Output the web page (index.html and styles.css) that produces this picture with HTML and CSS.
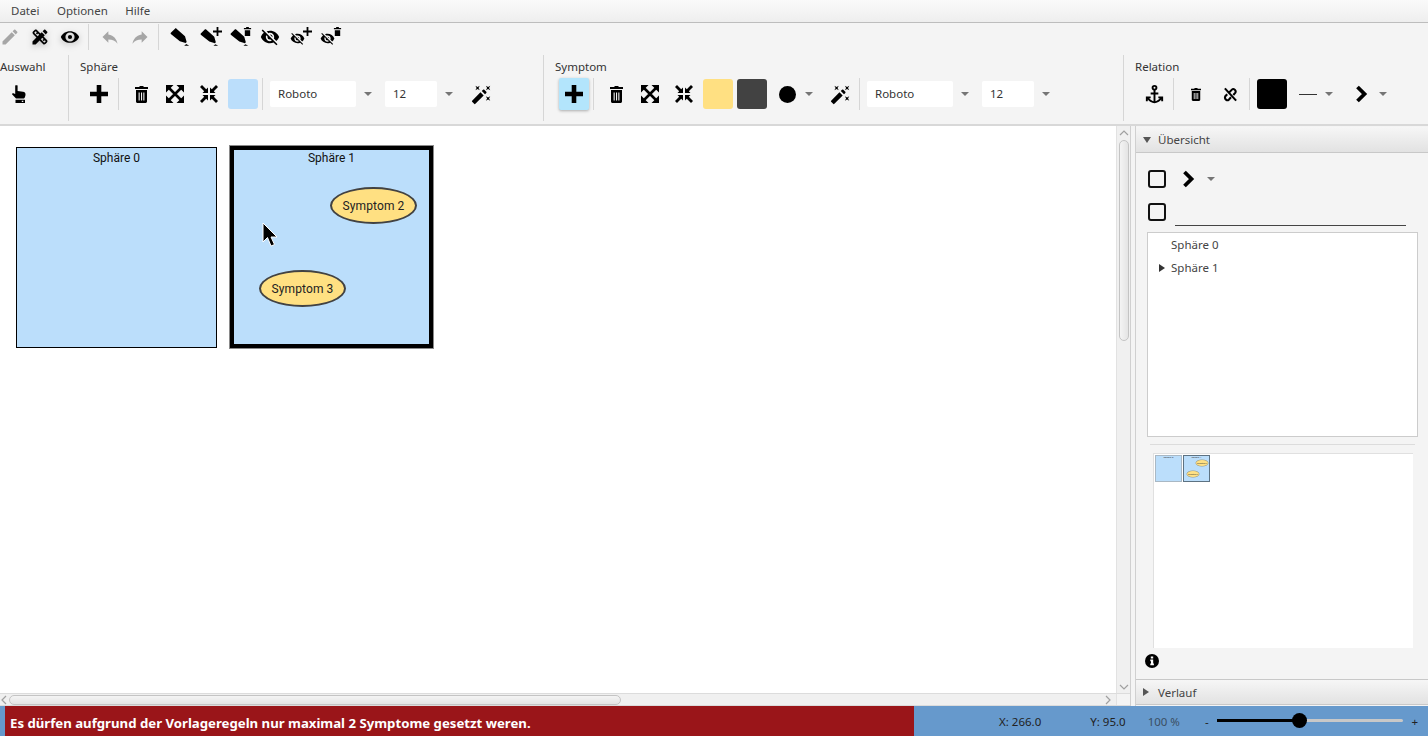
FILE: index.html
```html
<!DOCTYPE html>
<html lang="de">
<head>
  <meta charset="UTF-8" />
  <title>Symptom Editor</title>
  <link rel="stylesheet" href="styles.css">
</head>
<body>
  <svg class="defs" width="0" height="0">
    <symbol id="i-pencil" viewBox="0 0 24 24"><path d="M20.71,7.04C21.1,6.65 21.1,6 20.71,5.63L18.37,3.29C18,2.9 17.35,2.9 16.96,3.29L15.12,5.12L18.87,8.87M3,17.25V21H6.75L17.81,9.93L14.06,6.18L3,17.25Z"/></symbol>
    <symbol id="i-tools" viewBox="0 0 24 24"><path d="M16.24 11.51l1.57-1.57-3.75-3.75-1.57 1.57-4.14-4.13c-.78-.78-2.05-.78-2.83 0l-1.9 1.9c-.78.78-.78 2.05 0 2.83l4.13 4.13L3 17.25V21h3.75l4.76-4.76 4.13 4.13c.95.95 2.23.6 2.83 0l1.9-1.9c.78-.78.78-2.05 0-2.83l-4.13-4.13zm-7.06-.44L5.04 6.94l1.89-1.9L8.2 6.31 7.02 7.5l1.41 1.41 1.19-1.19 1.45 1.45-1.89 1.9zm7.88 7.89l-4.13-4.14 1.9-1.9 1.45 1.45-1.19 1.19 1.41 1.41 1.19-1.19 1.27 1.27-1.9 1.91zM20.71 7.04c.39-.39.39-1.02 0-1.41l-2.34-2.34c-.47-.47-1.12-.29-1.41 0l-1.83 1.83 3.75 3.75 1.83-1.83z"/></symbol>
    <symbol id="i-eye" viewBox="0 0 24 24"><path d="M12,9.500A2.500,2.500 0 0,0 9.500,12A2.500,2.500 0 0,0 12,14.500A2.500,2.500 0 0,0 14.500,12A2.500,2.500 0 0,0 12,9.500M12,17.500A5.500,5.500 0 0,1 6.500,12A5.500,5.500 0 0,1 12,6.500A5.500,5.500 0 0,1 17.500,12A5.500,5.500 0 0,1 12,17.500M12,5C7,5 2.730,7.800 1,12C2.730,16.200 7,19 12,19C17,19 21.270,16.200 23,12C21.270,7.800 17,5 12,5Z"/></symbol>
    <symbol id="i-eyeoff" viewBox="0 0 24 24"><path d="M11.83,9L15,12.16C15,12.11 15,12.05 15,12A3,3 0 0,0 12,9C11.94,9 11.89,9 11.83,9M7.53,9.8L9.08,11.35C9.03,11.56 9,11.77 9,12A3,3 0 0,0 12,15C12.22,15 12.44,14.97 12.65,14.92L14.2,16.47C13.53,16.8 12.79,17 12,17A5,5 0 0,1 7,12C7,11.21 7.2,10.47 7.53,9.8M2,4.27L4.28,6.55L4.73,7C3.08,8.3 1.78,10 1,12C2.73,16.39 7,19.5 12,19.5C13.55,19.5 15.03,19.2 16.38,18.66L16.81,19.08L19.73,22L21,20.73L3.27,3M12,7A5,5 0 0,1 17,12C17,12.64 16.87,13.26 16.64,13.82L19.57,16.75C21.07,15.5 22.27,13.86 23,12C21.27,7.61 17,4.5 12,4.5C10.6,4.5 9.26,4.75 8,5.2L10.17,7.35C10.74,7.13 11.35,7 12,7Z"/></symbol>
    <symbol id="i-undo" viewBox="0 0 24 24"><path d="M10 9V5l-7 7 7 7v-4.1c5 0 8.5 1.6 11 5.1-1-5-4-10-11-11z"/></symbol>
    <symbol id="i-redo" viewBox="0 0 24 24"><path d="M14 9V5l7 7-7 7v-4.1c-5 0-8.500 1.600-11 5.100 1-5 4-10 11-11z"/></symbol>
    <symbol id="i-marker" viewBox="0 0 24 24"><path d="M1 7 6 2c.5-.5 1.200-.5 1.800 0L18 11l2 7-1.200 1.200-7-2L1 8.500C.6 8 .6 7.500 1 7zM19.500 20.500 23 22.500h-6z"/></symbol>
    <symbol id="i-plusbadge" viewBox="0 0 10 10"><path d="M4 0h2v4h4v2H6v4H4V6H0V4h4z"/></symbol>
    <symbol id="i-binbadge" viewBox="0 0 10 10"><path d="M3.500 0h3v1H9v1.500H1V1h2.500zM2 3.500h6V10H2z"/></symbol>
    <symbol id="i-hand" viewBox="0 0 14 18"><path d="M3.200.6C3.800 0 5 0 5.600.6V6l5.400.7c1.500.2 2.500 1 2.500 2.500 0 1.500-.5 3.200-1.500 4.300H4L0 9.200l.8-1.200 2.400 1z"/><path fill-rule="evenodd" d="M3.500 14.800h9.500V18H3.500zM9.800 15.800h1.500v1.200H9.800z"/></symbol>
    <symbol id="i-plus" viewBox="0 0 18 18"><path d="M6.700 0h4.600v6.700H18v4.600h-6.700V18H6.700v-6.700H0V6.700h6.700z"/></symbol>
    <symbol id="i-trash" viewBox="0 0 13 17" preserveAspectRatio="none"><path fill-rule="evenodd" d="M4.500 0h4v1H13v2H0V1h4.500zM1 4h11v11.500c0 .8-.7 1.500-1.500 1.500h-8C1.700 17 1 16.300 1 15.500zM3.600 6.500v8h1.100v-8zM6 6.500v8h1.100v-8zM8.300 6.500v8h1.100v-8z"/></symbol>
    <symbol id="i-expand" viewBox="0 0 18 18"><path d="M0 0h7.500L0 7.500zM18 0v7.500L10.500 0zM0 18v-7.500L7.500 18zM18 18h-7.500l7.500-7.500z"/><path d="M3 3l12 12M15 3L3 15" fill="none" stroke="currentColor" stroke-width="2.600"/></symbol>
    <symbol id="i-compress" viewBox="0 0 18 18"><path d="M0 2 2 0l4.200 4.200L8 2.500V8H2.500l1.700-1.800zM18 2 16 0l-4.200 4.200L10 2.500V8h5.500l-1.700-1.800zM0 16l2 2 4.200-4.200L8 15.500V10H2.500l1.700 1.800zM18 16l-2 2-4.200-4.200L10 15.500V10h5.500l-1.700 1.800z"/></symbol>
    <symbol id="i-wand" viewBox="0 0 24 24"><path d="M7.500,5.600L5,7L6.400,4.500L5,2L7.500,3.400L10,2L8.600,4.500L10,7L7.500,5.600M19.500,15.400L22,14L20.600,16.500L22,19L19.500,17.600L17,19L18.400,16.500L17,14L19.500,15.400M22,2L20.600,4.500L22,7L19.500,5.600L17,7L18.400,4.500L17,2L19.500,3.400L22,2"/><path d="M1.300 19 10.800 9.500 14.500 13.200 5 22.700c-.4.400-1 .400-1.400 0L1.300 20.400c-.4-.4-.4-1 0-1.400zM12.300 8l1.500-1.500c.4-.4 1-.4 1.400 0l2.300 2.300c.4.400.4 1 0 1.400L16 11.700z"/></symbol>
    <symbol id="i-anchor" viewBox="0 0 24 24"><path d="M12,2A3,3 0 0,0 9,5C9,6.270 9.800,7.400 11,7.830V10H8V12H11V18.920C9.160,18.630 7.530,17.570 6.530,16H8V14H3V19H5V17.300C6.580,19.610 9.200,21 12,21C14.800,21 17.420,19.610 19,17.310V19H21V14H16V16H17.460C16.460,17.570 14.830,18.630 13,18.920V12H16V10H13V7.820C14.200,7.400 15,6.270 15,5A3,3 0 0,0 12,2M12,4A1,1 0 0,1 13,5A1,1 0 0,1 12,6A1,1 0 0,1 11,5A1,1 0 0,1 12,4Z"/></symbol>
    <symbol id="i-unlink" viewBox="0 0 16 16"><path d="M2 1.500 14 14.500M5.500 7 9.500 2.800c1.800-1.800 5.200 1 3.500 3.500L11 8.500M8.500 11 6.200 13.500C4.500 15 1 13 2.500 9.800L4.500 7.800" fill="none" stroke="currentColor" stroke-width="2.200"/></symbol>
    <symbol id="i-chevron" viewBox="0 0 12 18"><path d="M1.500 2 8.500 9l-7 7" fill="none" stroke="currentColor" stroke-width="3.800"/></symbol>
  </svg>

  <div class="app">
    <nav class="menubar">
      <span>Datei</span>
      <span>Optionen</span>
      <span>Hilfe</span>
    </nav>

    <header class="toolbar">
      <div class="quickbar">
        <svg class="qicon off"><use href="#i-pencil"/></svg>
        <svg class="qicon glow"><use href="#i-tools"/></svg>
        <svg class="qicon glow"><use href="#i-eye"/></svg>
        <i class="qsep"></i>
        <svg class="qicon off"><use href="#i-undo"/></svg>
        <svg class="qicon off"><use href="#i-redo"/></svg>
        <i class="qsep"></i>
        <svg class="qicon"><use href="#i-marker"/></svg>
        <span class="qbadge"><svg class="qbase"><use href="#i-marker"/></svg><svg class="badge"><use href="#i-plusbadge"/></svg></span>
        <span class="qbadge"><svg class="qbase"><use href="#i-marker"/></svg><svg class="badge"><use href="#i-binbadge"/></svg></span>
        <svg class="qicon"><use href="#i-eyeoff"/></svg>
        <span class="qbadge"><svg class="qbase small"><use href="#i-eyeoff"/></svg><svg class="badge"><use href="#i-plusbadge"/></svg></span>
        <span class="qbadge"><svg class="qbase small"><use href="#i-eyeoff"/></svg><svg class="badge"><use href="#i-binbadge"/></svg></span>
      </div>

      <div class="ribbon">
        <section class="group group-select">
          <h4>Auswahl</h4>
          <div class="tools">
            <button class="tool"><svg class="ic-hand"><use href="#i-hand"/></svg></button>
          </div>
        </section>

        <section class="group group-sphere">
          <h4>Sphäre</h4>
          <div class="tools">
            <button class="tool"><svg class="ic18"><use href="#i-plus"/></svg></button>
            <i class="sep"></i>
            <button class="tool"><svg class="ic-trash"><use href="#i-trash"/></svg></button>
            <button class="tool"><svg class="ic18"><use href="#i-expand"/></svg></button>
            <button class="tool"><svg class="ic18"><use href="#i-compress"/></svg></button>
            <span class="swatch blue"></span>
            <i class="sep"></i>
            <span class="combo wide">Roboto</span><b class="caret-box"><i class="caret"></i></b>
            <span class="combo narrow">12</span><b class="caret-box"><i class="caret"></i></b>
            <button class="tool"><svg class="ic20"><use href="#i-wand"/></svg></button>
          </div>
        </section>

        <section class="group group-symptom">
          <h4>Symptom</h4>
          <div class="tools">
            <button class="tool active"><svg class="ic18"><use href="#i-plus"/></svg></button>
            <i class="sep"></i>
            <button class="tool"><svg class="ic-trash"><use href="#i-trash"/></svg></button>
            <button class="tool"><svg class="ic18"><use href="#i-expand"/></svg></button>
            <button class="tool"><svg class="ic18"><use href="#i-compress"/></svg></button>
            <span class="swatch yellow"></span>
            <span class="swatch dark"></span>
            <span class="dropdown">
              <i class="dot"></i><i class="caret"></i>
            </span>
            <button class="tool"><svg class="ic20"><use href="#i-wand"/></svg></button>
            <i class="sep"></i>
            <span class="combo wide">Roboto</span><b class="caret-box"><i class="caret"></i></b>
            <span class="combo narrow">12</span><b class="caret-box"><i class="caret"></i></b>
          </div>
        </section>

        <section class="group group-relation">
          <h4>Relation</h4>
          <div class="tools">
            <button class="tool"><svg class="ic22"><use href="#i-anchor"/></svg></button>
            <i class="sep"></i>
            <button class="tool"><svg class="ic-trash small"><use href="#i-trash"/></svg></button>
            <button class="tool"><svg class="ic-unlink"><use href="#i-unlink"/></svg></button>
            <i class="sep"></i>
            <span class="swatch black"></span>
            <span class="linepick"><i class="dash"></i><i class="caret"></i></span>
            <span class="arrowpick"><svg class="chev"><use href="#i-chevron"/></svg><i class="caret"></i></span>
          </div>
        </section>
      </div>
    </header>

    <main class="workspace">
      <div class="editor">
        <div class="editor-top">
          <div class="canvas">
            <div class="sphere sphere-0">Sphäre 0</div>
            <div class="sphere sphere-1">Sphäre 1</div>
            <div class="symptom symptom-2">Symptom 2</div>
            <div class="symptom symptom-3">Symptom 3</div>
            <svg class="cursor" width="16" height="26" viewBox="0 0 16 26"><path d="M1 1v19l4.500-4.500L9 24l3.500-1.500-3.500-7.500H15z" stroke="#fff" stroke-width="1"/></svg>
          </div>
          <div class="vscroll">
            <svg class="sarrow" width="10" height="6" viewBox="0 0 10 6"><path d="M1 5l4-4 4 4"/></svg>
            <div class="vthumb"></div>
            <svg class="sarrow down" width="10" height="6" viewBox="0 0 10 6"><path d="M1 1l4 4 4-4"/></svg>
          </div>
        </div>
        <div class="hscroll">
          <svg class="sarrow left" width="6" height="10" viewBox="0 0 6 10"><path d="M5 1L1 5l4 4"/></svg>
          <div class="hthumb"></div>
          <svg class="sarrow right" width="6" height="10" viewBox="0 0 6 10"><path d="M1 1l4 4-4 4"/></svg>
          <div class="hcorner"></div>
        </div>
      </div>

      <aside class="sidebar">
        <div class="pane-title"><i class="tri-down"></i>Übersicht</div>
        <div class="pane">
          <div class="pane-row">
            <span class="square"></span>
            <svg class="chev side"><use href="#i-chevron"/></svg>
            <i class="caret"></i>
          </div>
          <div class="pane-row second">
            <span class="square"></span>
            <span class="namefield"></span>
          </div>
          <ul class="tree">
            <li>Sphäre 0</li>
            <li><i class="tri-right"></i>Sphäre 1</li>
          </ul>
          <hr class="rule">
          <div class="preview">
            <div class="thumb"><span>Sphäre 0</span></div>
            <div class="thumb selected">
              <span>Sphäre 1</span>
              <em class="mini mini-2">Symptom 2</em>
              <em class="mini mini-3">Symptom 3</em>
            </div>
          </div>
          <svg class="info" width="14" height="14" viewBox="0 0 14 14"><circle cx="7" cy="7" r="7"/><path d="M5.800 2.600h2.400v2H5.800zM5.300 5.600h2.900v4h.7v1.700H5.300V9.600H6V7.300h-.7z" fill="#fff"/></svg>
        </div>
        <div class="pane-title bottom"><i class="tri-right big"></i>Verlauf</div>
      </aside>
    </main>

    <footer class="statusbar">
      <div class="message">Es dürfen aufgrund der Vorlageregeln nur maximal 2 Symptome gesetzt weren.</div>
      <span class="coord coord-x">X: 266.0</span>
      <span class="coord coord-y">Y: 95.0</span>
      <span class="zoomval">100 %</span>
      <span class="zoomsign minus">-</span>
      <div class="slider"><i class="fill"></i><i class="knob"></i></div>
      <span class="zoomsign plus">+</span>
    </footer>
  </div>
</body>
</html>
```

FILE: styles.css
```css
* {
  box-sizing: border-box;
}
html, body {
  margin: 0;
  height: 100%;
  overflow: hidden;
}
body {
  font-family: 'Noto Sans', sans-serif;
  font-size: 11.500px;
  color: #333;
  background-color: #f4f4f4;
}
i, em {
  font-style: normal;
}
.defs {
  position: absolute;
}
.app {
  display: flex;
  flex-direction: column;
  height: 736px;
}

/* menu */
.menubar {
  display: flex;
  align-items: center;
  gap: 17.500px;
  height: 23px;
  padding: 0 0 2px 11px;
  background: linear-gradient(#fafafa, #eeeeee);
  border-bottom: 1px solid #bdbdbd;
  color: #444;
}

/* toolbar */
.toolbar {
  flex: none;
  height: 103px;
  border-bottom: 2px solid #d8d8d8;
  background-color: #f4f4f4;
}
.quickbar {
  display: flex;
  align-items: center;
  gap: 10px;
  height: 28px;
}
.qicon {
  flex: none;
  width: 20px;
  height: 20px;
  fill: #000;
}
.qicon.off {
  fill: #a6a6a6;
}
.qicon.glow {
  filter: drop-shadow(0 2px 3px rgba(0,0,0,0.25));
}
.qsep {
  flex: none;
  width: 1px;
  height: 26px;
  margin: 0 1px 0 -2px;
  background-color: #d6d6d6;
}
.qbadge {
  position: relative;
  flex: none;
  width: 20px;
  height: 20px;
}
.qbase {
  position: absolute;
  left: 0;
  top: 1px;
  width: 19px;
  height: 19px;
  fill: #000;
}
.qbase.small {
  top: 4px;
  width: 15px;
  height: 15px;
}
.badge {
  position: absolute;
  right: -2px;
  top: 0;
  width: 9px;
  height: 9px;
  fill: #000;
}
.ribbon {
  display: flex;
  margin-top: 4px;
}
.group {
  flex: none;
  height: 66px;
  padding-left: 11px;
  border-left: 1px solid #d6d6d6;
}
.group h4 {
  margin: 4px 0 3px;
  font-size: 11.500px;
  font-weight: 400;
  line-height: 16px;
  color: #333;
}
.group-select {
  width: 68px;
  padding-left: 0;
  border-left: none;
}
.group-sphere {
  width: 475px;
}
.group-symptom {
  width: 580px;
}
.group-relation {
  flex: 1;
}
.tools {
  display: flex;
  align-items: center;
  gap: 4px;
  height: 32px;
  margin-left: 4px;
}
.tool {
  flex: none;
  display: flex;
  align-items: center;
  justify-content: center;
  width: 30px;
  height: 32px;
  padding: 0;
  border: none;
  border-radius: 2px;
  background: none;
  color: #000;
}
.tool svg {
  fill: #000;
}
.tool.active {
  background-color: #b3e5fc;
  box-shadow: 0 1px 3px rgba(0,0,0,0.3);
}
.ic18 {
  width: 18px;
  height: 18px;
}
.ic20 {
  width: 21px;
  height: 21px;
}
.ic22 {
  width: 23px;
  height: 23px;
}
.ic-hand {
  width: 14px;
  height: 18px;
}
.ic-trash {
  width: 13px;
  height: 17px;
}
.ic-trash.small {
  width: 10px;
  height: 13px;
}
.ic-unlink {
  width: 15px;
  height: 15px;
}
.sep {
  flex: none;
  width: 1px;
  height: 32px;
  margin-right: 3px;
  background-color: #d6d6d6;
}
.swatch {
  flex: none;
  width: 30px;
  height: 30px;
  border-radius: 3px;
}
.swatch.blue {
  background-color: #bbdefb;
}
.swatch.yellow {
  background-color: #ffe082;
}
.swatch.dark {
  background-color: #424242;
}
.swatch.black {
  background-color: #000;
}
.combo {
  flex: none;
  height: 26px;
  padding-left: 8px;
  border-radius: 2px;
  background-color: #fff;
  line-height: 26px;
  color: #333;
}
.combo.wide {
  width: 86px;
}
.combo.narrow {
  width: 52px;
}
.caret-box {
  flex: none;
  display: flex;
  align-items: center;
  justify-content: center;
  width: 16px;
  margin-right: 5px;
}
.caret {
  flex: none;
  display: block;
  width: 0;
  height: 0;
  border-left: 4px solid transparent;
  border-right: 4px solid transparent;
  border-top: 4px solid #757575;
}
.dropdown {
  flex: none;
  display: flex;
  align-items: center;
  width: 44px;
  margin-right: 6px;
  padding-left: 8px;
  gap: 9px;
}
.dot {
  width: 17px;
  height: 17px;
  border-radius: 50%;
  background-color: #000;
}
.linepick {
  flex: none;
  display: flex;
  align-items: center;
  gap: 8px;
  margin-left: 8px;
}
.dash {
  width: 18px;
  height: 1px;
  background-color: #333;
}
.arrowpick {
  flex: none;
  display: flex;
  align-items: center;
  gap: 11px;
  margin-left: 19px;
}
.chev {
  display: block;
  width: 12px;
  height: 18px;
  color: #000;
}

/* main area */
.workspace {
  flex: 1;
  display: flex;
  min-height: 0;
}
.editor {
  flex: none;
  display: flex;
  flex-direction: column;
  width: 1131px;
  border-right: 1px solid #d0d0d0;
}
.editor-top {
  flex: 1;
  display: flex;
  min-height: 0;
}
.canvas {
  position: relative;
  flex: 1;
  background-color: #fff;
}
.sphere {
  position: absolute;
  text-align: center;
  background-color: #bbdefb;
  font-family: Roboto, sans-serif;
  font-size: 12px;
  color: #111;
  line-height: 14px;
}
.sphere-0 {
  left: 16px;
  top: 21px;
  width: 201px;
  height: 201px;
  border: 1px solid #000;
  padding-top: 3px;
}
.sphere-1 {
  left: 230px;
  top: 20px;
  width: 203px;
  height: 202px;
  border: 4px solid #000;
  outline: 1px solid #8a8a8a;
  padding-top: 1px;
}
.symptom {
  position: absolute;
  display: flex;
  align-items: center;
  justify-content: center;
  width: 87px;
  height: 37px;
  border: 2px solid #424242;
  border-radius: 50%;
  background-color: #ffe082;
  font-family: Roboto, sans-serif;
  font-size: 12px;
  letter-spacing: 0.1px;
  color: #222;
}
.symptom-2 {
  left: 330px;
  top: 61px;
}
.symptom-3 {
  left: 259px;
  top: 144px;
}
.cursor {
  position: absolute;
  left: 262px;
  top: 96px;
}
.vscroll {
  flex: none;
  display: flex;
  flex-direction: column;
  align-items: center;
  width: 14px;
  padding-top: 4px;
  border-left: 1px solid #e2e2e2;
  background-color: #f0f0f0;
}
.vthumb {
  width: 10px;
  height: 201px;
  margin-top: 4px;
  border: 1px solid #c4c4c4;
  border-radius: 5px;
  background: linear-gradient(90deg, #f4f4f4, #e4e4e4);
}
.sarrow {
  flex: none;
  fill: none;
  stroke: #a0a0a0;
  stroke-width: 1.2;
}
.sarrow.down {
  margin-top: auto;
  margin-bottom: 3px;
}
.hscroll {
  flex: none;
  display: flex;
  align-items: center;
  height: 13px;
  border-top: 1px solid #dcdcdc;
  border-bottom: 1px solid #dcdcdc;
  background-color: #f0f0f0;
}
.sarrow.left {
  margin-left: 1px;
}
.hthumb {
  width: 612px;
  height: 10px;
  margin-left: 2px;
  border: 1px solid #c4c4c4;
  border-radius: 5px;
  background: linear-gradient(#f4f4f4, #e4e4e4);
}
.sarrow.right {
  margin-left: auto;
  margin-right: 5px;
}
.hcorner {
  width: 14px;
  height: 100%;
  background-color: #f4f4f4;
  border-left: 1px solid #e2e2e2;
}

/* right side */
.sidebar {
  flex: 1;
  display: flex;
  flex-direction: column;
  margin-left: 4px;
  border-left: 1px solid #d0d0d0;
}
.pane-title {
  flex: none;
  display: flex;
  align-items: center;
  height: 26px;
  margin-top: 1px;
  padding-left: 7px;
  background: linear-gradient(#f6f6f6, #e2e2e2);
  border-bottom: 1px solid #c8c8c8;
  color: #444;
}
.pane-title.bottom {
  margin: 0 0 1px;
  border-top: 1px solid #c8c8c8;
  border-bottom: 1px solid #c8c8c8;
}
.tri-down {
  width: 0;
  height: 0;
  margin-right: 7px;
  border-left: 4px solid transparent;
  border-right: 4px solid transparent;
  border-top: 6px solid #555;
}
.tri-right {
  display: inline-block;
  width: 0;
  height: 0;
  margin-right: 6px;
  border-top: 4px solid transparent;
  border-bottom: 4px solid transparent;
  border-left: 6px solid #333;
}
.tri-right.big {
  margin-right: 9px;
  border-left-color: #555;
}
.pane {
  position: relative;
  flex: 1;
  padding: 17px 10px 0 11px;
  background-color: #f4f4f4;
}
.pane-row {
  display: flex;
  align-items: center;
  height: 18px;
  margin-left: 1px;
}
.pane-row.second {
  align-items: flex-start;
  height: 23px;
  margin-top: 15px;
}
.square {
  flex: none;
  width: 18px;
  height: 18px;
  border: 2px solid #111;
  border-radius: 3px;
}
.chev.side {
  margin-left: 17px;
}
.pane-row .caret {
  margin-left: 12px;
}
.namefield {
  width: 231px;
  height: 23px;
  margin-left: 9px;
  border-bottom: 1px solid #444;
}
.tree {
  height: 205px;
  margin: 6px 0 0;
  padding: 0 0 0 23px;
  list-style: none;
  border: 1px solid #ccc;
  background-color: #fff;
}
.tree li {
  height: 23px;
  line-height: 23px;
  color: #444;
}
.tree .tri-right {
  margin-left: -12px;
}
.rule {
  height: 1px;
  margin: 7px 3px 0 3px;
  border: none;
  background-color: #dcdcdc;
}
.preview {
  display: flex;
  align-items: flex-start;
  gap: 1px;
  width: 260px;
  height: 195px;
  margin: 8px 0 0 6px;
  padding: 1px;
  border-top: 1px solid #e0e0e0;
  border-left: 1px solid #e0e0e0;
  background-color: #fff;
}
.thumb {
  position: relative;
  width: 27px;
  height: 27px;
  border: 1px solid #a9b8c4;
  background-color: #bbdefb;
  font-family: Roboto, sans-serif;
  font-size: 2.500px;
  line-height: 4px;
  text-align: center;
  color: #333;
}
.thumb span {
  display: block;
}
.thumb.selected {
  border-color: #5d7282;
}
.mini {
  position: absolute;
  width: 12px;
  height: 6px;
  border-radius: 50%;
  background-color: #ffe082;
  box-shadow: 0 0 0 0.5px #9a9a80;
  font-size: 2px;
  line-height: 6px;
  white-space: nowrap;
  overflow: hidden;
}
.mini-2 {
  left: 12px;
  top: 4px;
}
.mini-3 {
  left: 3px;
  top: 15px;
}
.info {
  position: absolute;
  left: 9px;
  top: 501px;
}

/* status bar */
.statusbar {
  flex: none;
  display: flex;
  align-items: center;
  height: 30px;
  padding-left: 5px;
  background-color: #6699cc;
  color: #222;
}
.message {
  flex: none;
  width: 909px;
  height: 100%;
  padding-left: 5px;
  background-color: #9a1519;
  color: #fff;
  font-weight: 700;
  font-size: 13.200px;
  line-height: 34px;
}
.coord-x {
  margin-left: 85px;
}
.coord-y {
  margin-left: 49px;
}
.zoomval {
  margin-left: 22px;
  color: #3b4f63;
}
.zoomsign.minus {
  margin-left: 25px;
}
.slider {
  position: relative;
  width: 186px;
  height: 3px;
  margin: 0 0 2px 8px;
  border-radius: 2px;
  background-color: #c8c8c8;
}
.fill {
  display: block;
  width: 83px;
  height: 3px;
  background-color: #000;
}
.knob {
  position: absolute;
  left: 75px;
  top: -6px;
  width: 15px;
  height: 15px;
  border-radius: 50%;
  background-color: #000;
}
.zoomsign.plus {
  margin-left: 9px;
}
```
